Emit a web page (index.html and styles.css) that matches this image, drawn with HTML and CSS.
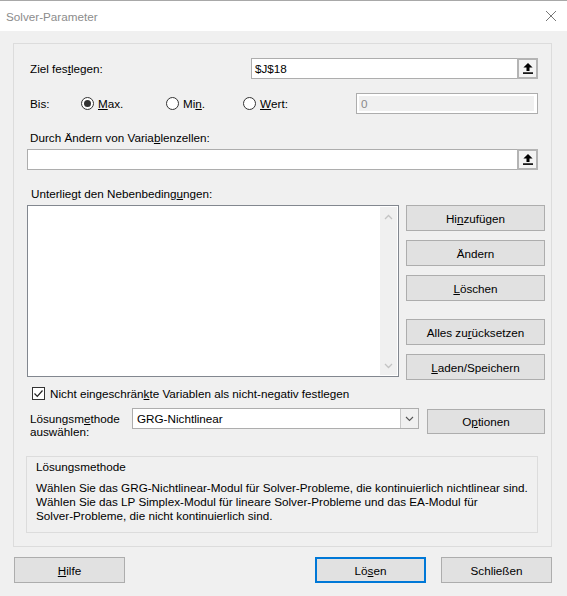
FILE: index.html
```html
<!DOCTYPE html>
<html lang="de">
<head>
    <meta charset="UTF-8">
    <title>Solver-Parameter</title>
    <link rel="stylesheet" href="styles.css">
</head>
<body>
<div class="window">
    <div class="titlebar">
        <span class="title">Solver-Parameter</span>
        <svg class="close" width="12" height="12" viewBox="0 0 12 12"><path d="M1 1 L11 11 M11 1 L1 11" stroke="#777" stroke-width="1" fill="none"/></svg>
    </div>

    <div class="panel">
        <div class="row row-target">
            <span class="lbl lbl-target">Ziel fes<u>t</u>legen:</span>
            <div class="refbox refbox-target">
                <span class="refval">$J$18</span>
                <span class="refbtn"><svg width="10" height="11" viewBox="0 0 10 11"><path d="M5 0 L9.6 4.6 H6.5 V8 H3.5 V4.6 H0.4 Z" fill="#000"/><rect x="0" y="9.3" width="10" height="1.6" fill="#000"/></svg></span>
            </div>
        </div>

        <div class="row row-to">
            <span class="lbl lbl-bis">Bis:</span>
            <span class="opt opt-max"><span class="radio checked"></span><u>M</u>ax.</span>
            <span class="opt opt-min"><span class="radio"></span>Mi<u>n</u>.</span>
            <span class="opt opt-wert"><span class="radio"></span><u>W</u>ert:</span>
            <div class="valbox"><div class="valinner">0</div></div>
        </div>

        <div class="lbl lbl-block lbl-vars">Durch Ändern von Varia<u>b</u>lenzellen:</div>
        <div class="refbox refbox-vars">
            <span class="refval"></span>
            <span class="refbtn"><svg width="10" height="11" viewBox="0 0 10 11"><path d="M5 0 L9.6 4.6 H6.5 V8 H3.5 V4.6 H0.4 Z" fill="#000"/><rect x="0" y="9.3" width="10" height="1.6" fill="#000"/></svg></span>
        </div>

        <div class="lbl lbl-block lbl-cons">Unterliegt den Nebenbeding<u>u</u>ngen:</div>
        <div class="row row-list">
            <div class="listbox">
                <div class="listarea"></div>
                <div class="scrollbar">
                    <svg width="9" height="6" viewBox="0 0 9 6"><path d="M1 5 L4.5 1.5 L8 5" stroke="#c4c4c4" stroke-width="1.3" fill="none"/></svg>
                    <svg width="9" height="6" viewBox="0 0 9 6"><path d="M1 1 L4.5 4.5 L8 1" stroke="#c4c4c4" stroke-width="1.3" fill="none"/></svg>
                </div>
            </div>
            <div class="sidebtns">
                <button class="btn">Hi<u>n</u>zufügen</button>
                <button class="btn">Ändern</button>
                <button class="btn"><u>L</u>öschen</button>
                <button class="btn btn-gap">Alles zu<u>r</u>ücksetzen</button>
                <button class="btn"><u>L</u>aden/Speichern</button>
            </div>
        </div>

        <div class="row row-check">
            <span class="checkbox"><svg width="11" height="11" viewBox="0 0 11 11"><path d="M1.5 5.5 L4.3 8.3 L9.5 2.5" stroke="#222" stroke-width="1.2" fill="none"/></svg></span>
            <span>Nicht eingeschrän<u>k</u>te Variablen als nicht-negativ festlegen</span>
        </div>

        <div class="row row-method">
            <span class="lbl lbl-method">Lösungsm<u>e</u>thode<br>auswählen:</span>
            <div class="select">
                <span class="selval">GRG-Nichtlinear</span>
                <span class="selbtn"><svg width="9" height="6" viewBox="0 0 9 6"><path d="M1 1 L4.5 4.5 L8 1" stroke="#555" stroke-width="1.1" fill="none"/></svg></span>
            </div>
            <button class="btn btn-options">O<u>p</u>tionen</button>
        </div>

        <div class="descbox">
            <div class="desctitle">Lösungsmethode</div>
            <div class="desctext">Wählen Sie das GRG-Nichtlinear-Modul für Solver-Probleme, die kontinuierlich nichtlinear sind.<br>Wählen Sie das LP Simplex-Modul für lineare Solver-Probleme und das EA-Modul für<br>Solver-Probleme, die nicht kontinuierlich sind.</div>
        </div>
    </div>

    <div class="footer">
        <button class="btn btn-foot"><u>H</u>ilfe</button>
        <div class="footright">
            <button class="btn btn-foot btn-default">Lö<u>s</u>en</button>
            <button class="btn btn-foot">Schließen</button>
        </div>
    </div>
</div>
</body>
</html>
```

FILE: styles.css
```css
body {
    margin: 0;
    padding: 0;
    background-color: #f0f0f0;
    font-family: "Liberation Sans", Arial, sans-serif;
    font-size: 11.7px;
    color: #000;
}

.window {
    width: 567px;
    height: 596px;
    box-sizing: border-box;
    border-top: 1px solid #a8a8a8;
    background-color: #f0f0f0;
}

.titlebar {
    height: 30px;
    background-color: #fff;
    display: flex;
    align-items: center;
    justify-content: space-between;
    padding: 0 10px 0 6px;
}
.title {
    color: #8c8c8c;
}

u {
    text-decoration: underline;
    text-underline-offset: 1px;
}

.panel {
    margin: 12px 0 0 13px;
    width: 539px;
    height: 504px;
    box-sizing: border-box;
    border: 1px solid #dcdcdc;
    padding: 0 0 0 13px;
    display: flex;
    flex-direction: column;
}

.row {
    display: flex;
    align-items: center;
}

.lbl {
    line-height: 16px;
    margin-left: 3px;
}

.row-target {
    margin-top: 14px;
    height: 21px;
}
.lbl-target {
    width: 221px;
}

.refbox {
    display: flex;
    height: 21px;
    box-sizing: border-box;
    border: 1px solid #adadad;
    background-color: #fff;
}
.refbox-target {
    width: 287px;
}
.refbox-vars {
    width: 511px;
    margin-top: 3px;
}
.refval {
    flex: 1;
    line-height: 19px;
    padding-left: 3px;
}
.refbtn {
    width: 21px;
    height: 21px;
    margin: -1px -1px 0 0;
    box-sizing: border-box;
    border: 2px solid #b4b4b4;
    background-color: #f3f3f3;
    display: flex;
    align-items: center;
    justify-content: center;
}

.row-to {
    margin-top: 14px;
    height: 21px;
}
.lbl-bis {
    width: 51px;
}
.opt {
    display: flex;
    align-items: center;
}
.opt-max { width: 85px; }
.opt-min { width: 77px; }
.opt-wert { width: 113px; }

.radio {
    width: 13px;
    height: 13px;
    box-sizing: border-box;
    border: 1px solid #333;
    border-radius: 50%;
    background-color: #fff;
    margin-right: 4px;
    position: relative;
}
.radio.checked::after {
    content: "";
    position: absolute;
    left: 2px;
    top: 2px;
    width: 7px;
    height: 7px;
    border-radius: 50%;
    background-color: #333;
}

.valbox {
    width: 182px;
    height: 21px;
    box-sizing: border-box;
    border: 1px solid #adadad;
    background-color: #fff;
    padding: 2px 3px 2px 2px;
}
.valinner {
    height: 15px;
    background-color: #f0f0f0;
    color: #8a8a8a;
    line-height: 15px;
    padding-left: 2px;
}

.lbl-block {
    height: 16px;
}
.lbl-vars {
    margin-top: 16px;
}
.lbl-cons {
    margin-top: 16px;
    margin-left: 4px;
}

.row-list {
    margin-top: 3px;
    height: 175px;
    align-items: flex-start;
}
.listbox {
    width: 372px;
    height: 172px;
    box-sizing: border-box;
    border: 1px solid #82878f;
    background-color: #fff;
    display: flex;
    padding: 1px;
}
.listarea {
    flex: 1;
}
.scrollbar {
    width: 17px;
    background-color: #f0f0f0;
    display: flex;
    flex-direction: column;
    align-items: center;
    justify-content: space-between;
    padding: 7px 0 6px;
}

.sidebtns {
    margin-left: 7px;
    width: 139px;
    display: flex;
    flex-direction: column;
    gap: 9px;
}
.btn {
    height: 26px;
    box-sizing: border-box;
    border: 1px solid #adadad;
    background-color: #e1e1e1;
    font-family: inherit;
    font-size: 11.7px;
    color: #000;
    padding: 0;
    cursor: pointer;
}
.sidebtns .btn {
    width: 139px;
}
.btn-gap {
    margin-top: 9px;
}

.row-check {
    margin-top: 5px;
    height: 16px;
    margin-left: 5px;
}
.checkbox {
    width: 13px;
    height: 13px;
    box-sizing: border-box;
    border: 1px solid #333;
    background-color: #fff;
    display: flex;
    align-items: center;
    justify-content: center;
    margin-right: 5px;
}

.row-method {
    margin-top: 7px;
    height: 26px;
    align-items: flex-start;
}
.lbl-method {
    width: 102px;
    line-height: 13px;
    margin-top: 4px;
}
.select {
    width: 287px;
    height: 21px;
    box-sizing: border-box;
    border: 1px solid #adadad;
    background-color: #fff;
    display: flex;
}
.selval {
    flex: 1;
    line-height: 19px;
    padding-left: 4px;
}
.selbtn {
    width: 17px;
    border-left: 1px solid #c8c8c8;
    background-color: #f0f0f0;
    display: flex;
    align-items: center;
    justify-content: center;
}
.btn-options {
    width: 118px;
    height: 25px;
    margin: 1px 0 0 8px;
}

.descbox {
    margin: 22px 0 0 -1px;
    width: 512px;
    height: 77px;
    box-sizing: border-box;
    border: 1px solid #dcdcdc;
    padding: 3px 0 0 9px;
}
.desctitle {
    line-height: 14px;
}
.desctext {
    margin-top: 7px;
    line-height: 14px;
    white-space: nowrap;
}

.footer {
    margin: 10px 15px 0 14px;
    display: flex;
    justify-content: space-between;
}
.footright {
    display: flex;
    gap: 15px;
}
.btn-foot {
    width: 111px;
    height: 26px;
}
.btn-default {
    border: 2px solid #0078d7;
}
```
